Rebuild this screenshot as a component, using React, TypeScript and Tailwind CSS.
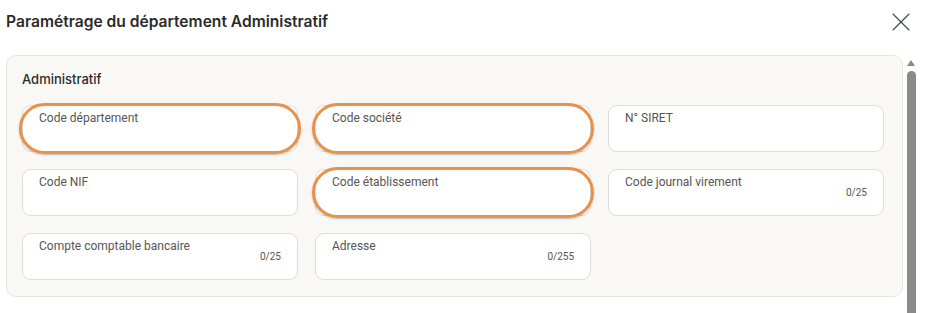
import { X } from 'lucide-react';

interface Field {
  label: string;
  counter?: string;
  circled?: boolean;
}

const rows: Field[][] = [
  [
    { label: 'Code département', circled: true },
    { label: 'Code société', circled: true },
    { label: 'N° SIRET' },
  ],
  [
    { label: 'Code NIF' },
    { label: 'Code établissement', circled: true },
    { label: 'Code journal virement', counter: '0/25' },
  ],
  [
    { label: 'Compte comptable bancaire', counter: '0/25' },
    { label: 'Adresse', counter: '0/255' },
  ],
];

const FieldBox = ({ field }: { field: Field }) => (
  <div className="relative h-[47px] w-[276px] rounded-[9px] border border-[#dfddd8] bg-white">
    <p className="pl-[16px] pt-[3px] text-[12px] leading-[18px] text-[#555555]">{field.label}</p>
    {field.counter && (
      <span className="absolute right-[16px] top-[16px] text-[10px] leading-[14px] text-[#555555]">
        {field.counter}
      </span>
    )}
    {field.circled && (
      <div className="pointer-events-none absolute -bottom-[3px] -left-[4px] -right-[4px] -top-[3px] rounded-[26px] border-[3px] border-[#e8914a] shadow-[0_1px_2px_rgba(0,0,0,0.25)]" />
    )}
  </div>
);

const App = () => {
  return (
    <div className="h-[313px] w-[925px] overflow-hidden bg-white" style={{ fontFamily: 'Roboto, "Noto Sans", sans-serif' }}>
      <div className="flex h-[44px] items-center justify-between pl-[6px] pr-[8px]">
        <h1 className="text-[15.6px] font-semibold text-[#2b2b2b]" style={{ fontFamily: 'Inter, "Noto Sans", sans-serif' }}>
          Paramétrage du département Administratif
        </h1>
        <X className="h-[32px] w-[32px] text-[#3a4550]" strokeWidth={0.8} />
      </div>
      <div className="flex pl-[6px]">
        <div className="mt-[11px] h-[242px] w-[897px] rounded-[10px] border border-[#e6e4df] bg-[#f9f8f5] pl-[15px] pt-[14px]">
          <h2 className="text-[13px] font-medium leading-[18px] text-[#2b2b2b]" style={{ fontFamily: 'Inter, "Noto Sans", sans-serif' }}>
            Administratif
          </h2>
          <div className="mt-[17px] flex flex-col gap-[17px]">
            {rows.map((row, i) => (
              <div key={i} className="flex gap-[17px]">
                {row.map((f) => (
                  <FieldBox key={f.label} field={f} />
                ))}
              </div>
            ))}
          </div>
        </div>
        <div className="ml-[2px] mt-[16px] flex w-[12px] flex-col items-center">
          <div className="h-0 w-0 border-x-[4px] border-b-[6px] border-x-transparent border-b-[#8a8a8a]" />
          <div className="mt-[5px] h-[260px] w-[9px] rounded-t-[5px] bg-[#8a8a8a]" />
        </div>
      </div>
    </div>
  );
};

export default App;
